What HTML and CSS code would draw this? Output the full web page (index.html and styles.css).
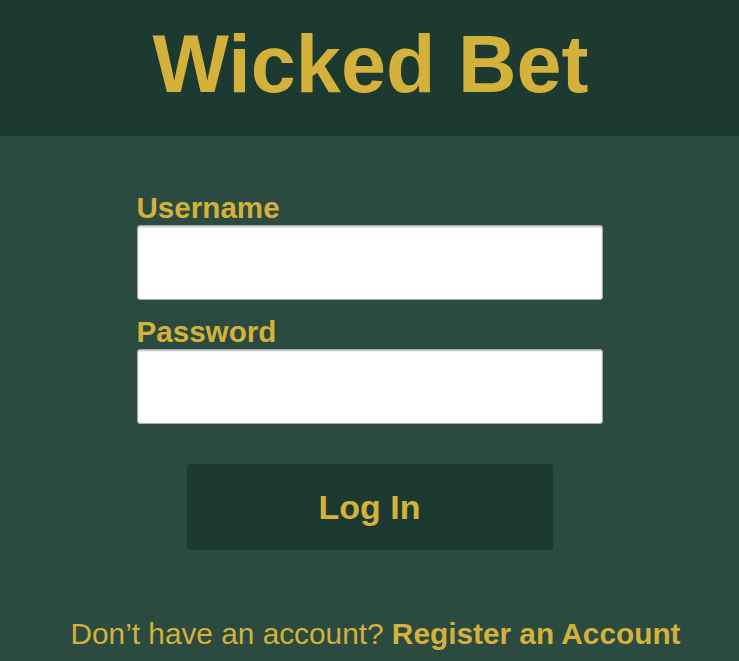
FILE: index.html
```html
<!DOCTYPE html>
<html lang="en">
<head>
<meta charset="utf-8">
<title>Wicked Bet</title>
<link rel="stylesheet" href="styles.css">
</head>
<body>
<header class="top">
  <h1 class="brand">Wicked Bet</h1>
</header>
<main class="content">
  <form class="login">
    <label class="field-label" for="username">Username</label>
    <input class="field-input" id="username" type="text">
    <label class="field-label field-label--gap" for="password">Password</label>
    <input class="field-input" id="password" type="password">
    <div class="actions">
      <button class="btn" type="button">Log In</button>
    </div>
  </form>
  <p class="register">Don’t have an account? <a class="register-link" href="#">Register an Account</a></p>
</main>
</body>
</html>
```
FILE: styles.css
```css
html, body {
  margin: 0;
  padding: 0;
  height: 100%;
}
body {
  background: #2b4a40;
  font-family: "Liberation Sans", Arial, sans-serif;
  color: #d4b13a;
}
.top {
  background: #1c3a30;
  height: 136px;
  display: flex;
  align-items: center;
  justify-content: center;
}
.brand {
  margin: 0;
  font-size: 81px;
  font-weight: bold;
  line-height: 1;
  color: #d4b13a;
  transform: translate(1px, -4px);
}
.content {
  display: flex;
  flex-direction: column;
  align-items: center;
  padding-top: 57px;
}
.login {
  width: 466px;
  display: flex;
  flex-direction: column;
}
.field-label {
  display: block;
  font-size: 29.6px;
  font-weight: bold;
  line-height: 30px;
  margin-bottom: 2px;
}
.field-label--gap {
  margin-top: 17px;
}
.field-input {
  box-sizing: border-box;
  width: 466px;
  height: 75px;
  margin: 0;
  border: 1px solid #a3acab;
  border-radius: 3px;
  background: #fff;
  box-shadow: inset 0 1px 2px rgba(0, 0, 0, 0.25);
  font-size: 24px;
  padding: 0 10px;
}
.actions {
  display: flex;
  justify-content: center;
  margin-top: 40px;
}
.btn {
  width: 366px;
  height: 86px;
  background: #1c3a30;
  border: none;
  border-radius: 4px;
  color: #d4b13a;
  font-family: "Liberation Sans", Arial, sans-serif;
  font-size: 34px;
  font-weight: bold;
  padding: 0;
}
.register {
  margin: 67px 0 0;
  font-size: 29.8px;
  line-height: 34px;
  text-align: center;
  transform: translateX(6px);
}
.register-link {
  color: #d4b13a;
  font-weight: bold;
  text-decoration: none;
}
```
